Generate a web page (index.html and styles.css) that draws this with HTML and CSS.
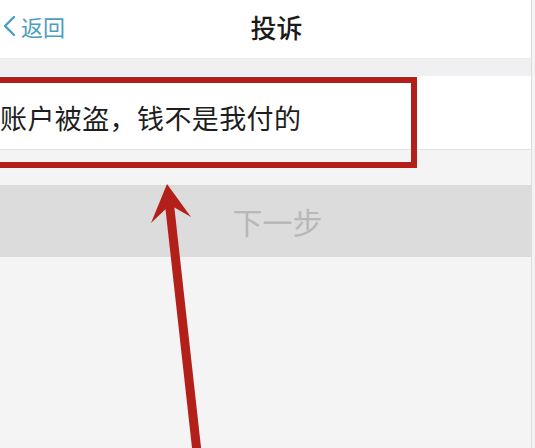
FILE: index.html
```html
<!DOCTYPE html>
<html lang="zh">
<head>
<meta charset="utf-8">
<link rel="stylesheet" href="styles.css">
</head>
<body>
<div class="page">
  <header class="nav">
    <div class="back">
      <svg class="chev" viewBox="0 0 14 22" width="14" height="22"><path d="M12 2 L3 11 L12 20" fill="none" stroke="#4c9dbf" stroke-width="2.4" stroke-linecap="round" stroke-linejoin="round"/></svg>
      <span>返回</span>
    </div>
    <h1 class="title">投诉</h1>
  </header>
  <div class="spacer-top"></div>
  <div class="row"><span class="reason">账户被盗，钱不是我付的</span></div>
  <div class="spacer-mid"></div>
  <div class="btn">下一步</div>
  <div class="highlight"></div>
  <svg class="arrow" viewBox="0 0 535 448" width="535" height="448">
    <line x1="169" y1="200" x2="197" y2="452" stroke="#b3201a" stroke-width="9"/>
    <polygon points="167,184 191,217 170,205 151,223" fill="#b3201a"/>
  </svg>
</div>
</body>
</html>
```
FILE: styles.css
```css
html, body {
  margin: 0;
  padding: 0;
  background: #f4f4f4;
}
body {
  font-family: "Noto Sans CJK SC", "Noto Sans", sans-serif;
  width: 535px;
  height: 448px;
  overflow: hidden;
}
.page {
  position: relative;
  width: 531px;
  height: 448px;
  border-right: 1px solid #dcdcdc;
  background: #f4f4f4;
}
.nav {
  height: 58px;
  background: #ffffff;
  display: flex;
  align-items: center;
  justify-content: center;
  position: relative;
}
.back {
  position: absolute;
  left: 2px;
  top: 13px;
  display: flex;
  align-items: center;
  gap: 5px;
  color: #4c9dbf;
  font-size: 22px;
  line-height: 26px;
}
.chev {
  display: block;
}
.title {
  margin: 0;
  font-size: 26px;
  font-weight: 500;
  color: #1a1a1a;
  line-height: 30px;
  margin-left: 22px;
  margin-top: -4px;
}
.spacer-top {
  height: 18px;
  background: #f0f0f2;
  border-top: 1px solid #ececee;
  box-sizing: border-box;
}
.row {
  height: 74px;
  background: #ffffff;
  border-bottom: 1px solid #e2e2e2;
  box-sizing: border-box;
  display: flex;
  align-items: center;
}
.reason {
  margin-left: 0;
  margin-top: 9px;
  font-size: 27px;
  color: #1e1e1e;
  letter-spacing: 0.4px;
}
.spacer-mid {
  height: 35px;
}
.btn {
  height: 72px;
  background: #dcdcdc;
  display: flex;
  align-items: center;
  justify-content: center;
  color: #b8b8b8;
  font-size: 30px;
  padding-left: 24px;
  box-sizing: border-box;
}
.highlight {
  position: absolute;
  left: -10px;
  top: 77px;
  width: 427px;
  height: 91px;
  border: 6px solid #b3201a;
  box-sizing: border-box;
}
.arrow {
  position: absolute;
  left: 0;
  top: 0;
}
```
